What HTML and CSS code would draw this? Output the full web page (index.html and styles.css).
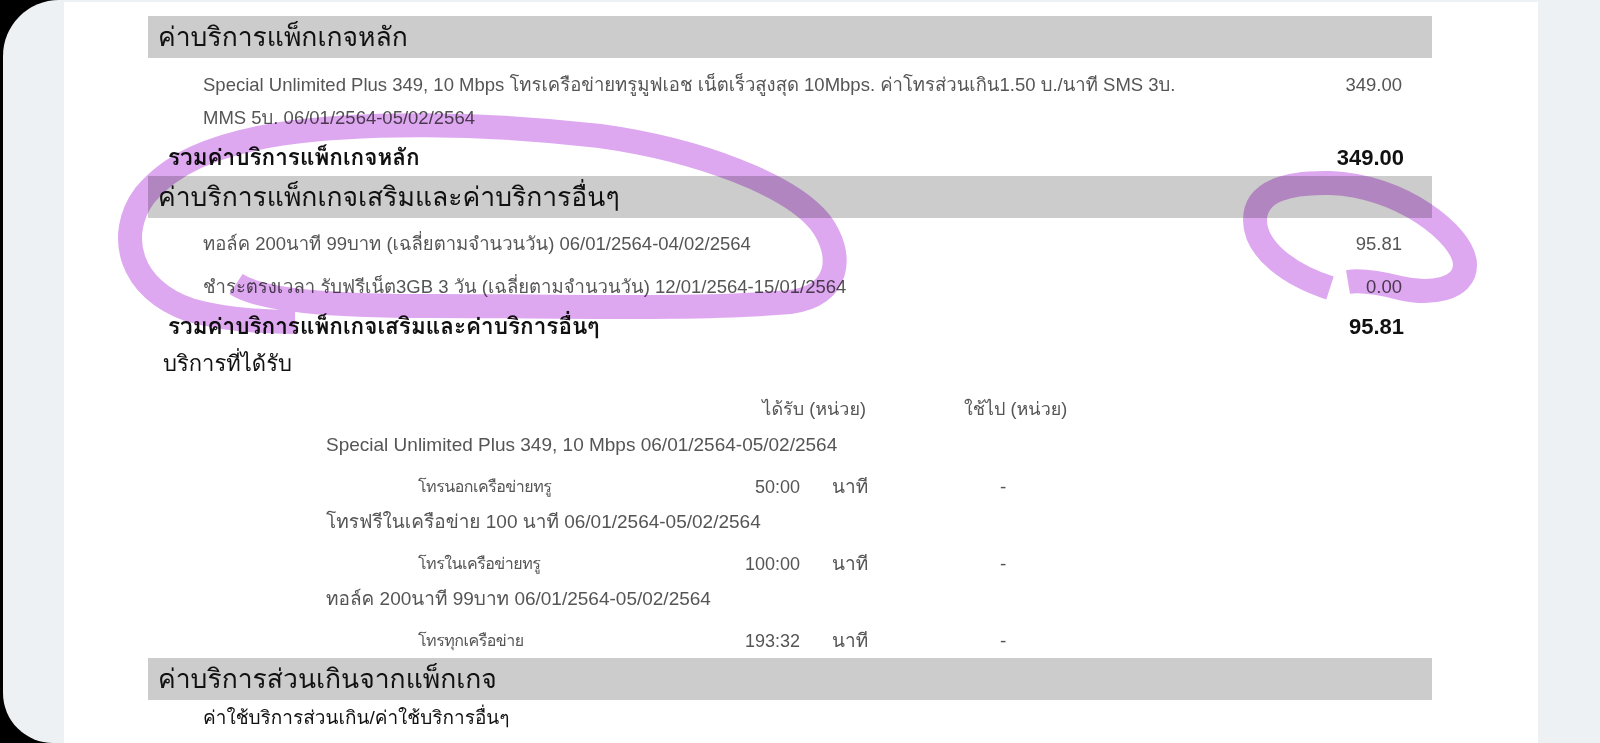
FILE: index.html
```html
<!DOCTYPE html>
<html lang="th">
<head>
    <meta charset="UTF-8">
    <meta name="viewport" content="width=device-width, initial-scale=1.0">
    <title>ใบแจ้งค่าบริการ</title>
    <link rel="stylesheet" href="styles.css">
</head>
<body>
    <div class="viewport">
        <div class="screen">
            <div class="page">
                <div class="content">
                    <div class="bar">ค่าบริการแพ็กเกจหลัก</div>
                    <div class="items">
                        <div class="item">
                            <div class="item-name">Special Unlimited Plus 349, 10 Mbps โทรเครือข่ายทรูมูฟเอช เน็ตเร็วสูงสุด 10Mbps. ค่าโทรส่วนเกิน1.50 บ./นาที SMS 3บ.<br>MMS 5บ. 06/01/2564-05/02/2564</div>
                            <div class="item-price">349.00</div>
                        </div>
                    </div>
                    <div class="total">
                        <span>รวมค่าบริการแพ็กเกจหลัก</span>
                        <span class="total-amount">349.00</span>
                    </div>

                    <div class="bar">ค่าบริการแพ็กเกจเสริมและค่าบริการอื่นๆ</div>
                    <div class="items">
                        <div class="item">
                            <div class="item-name">ทอล์ค 200นาที 99บาท (เฉลี่ยตามจำนวนวัน) 06/01/2564-04/02/2564</div>
                            <div class="item-price">95.81</div>
                        </div>
                        <div class="item">
                            <div class="item-name">ชำระตรงเวลา รับฟรีเน็ต3GB 3 วัน (เฉลี่ยตามจำนวนวัน) 12/01/2564-15/01/2564</div>
                            <div class="item-price">0.00</div>
                        </div>
                    </div>
                    <div class="total">
                        <span>รวมค่าบริการแพ็กเกจเสริมและค่าบริการอื่นๆ</span>
                        <span class="total-amount">95.81</span>
                    </div>

                    <div class="heading">บริการที่ได้รับ</div>
                    <div class="svc">
                        <div class="svc-head svc-got">ได้รับ (หน่วย)</div>
                        <div class="svc-head svc-used">ใช้ไป (หน่วย)</div>

                        <div class="svc-pkg">Special Unlimited Plus 349, 10 Mbps 06/01/2564-05/02/2564</div>
                        <div class="svc-name">โทรนอกเครือข่ายทรู</div>
                        <div class="svc-amount">50:00</div>
                        <div class="svc-unit">นาที</div>
                        <div class="svc-dash">-</div>

                        <div class="svc-pkg">โทรฟรีในเครือข่าย 100 นาที 06/01/2564-05/02/2564</div>
                        <div class="svc-name">โทรในเครือข่ายทรู</div>
                        <div class="svc-amount">100:00</div>
                        <div class="svc-unit">นาที</div>
                        <div class="svc-dash">-</div>

                        <div class="svc-pkg">ทอล์ค 200นาที 99บาท 06/01/2564-05/02/2564</div>
                        <div class="svc-name">โทรทุกเครือข่าย</div>
                        <div class="svc-amount">193:32</div>
                        <div class="svc-unit">นาที</div>
                        <div class="svc-dash">-</div>
                    </div>

                    <div class="bar">ค่าบริการส่วนเกินจากแพ็กเกจ</div>
                    <div class="sub-heading">ค่าใช้บริการส่วนเกิน/ค่าใช้บริการอื่นๆ</div>
                </div>
            </div>
        </div>

        <!-- highlighter marks drawn over the bill -->
        <svg class="marker" width="1600" height="743" viewBox="0 0 1600 743">
            <path d="M 236 284 C 260 300, 330 306, 430 306 C 560 306, 700 310, 790 302 C 840 296, 845 255, 820 222 C 790 185, 700 150, 600 136 C 480 122, 360 122, 280 134 C 210 145, 170 165, 145 195 C 115 235, 130 290, 190 310 C 225 320, 260 322, 295 322"/>
            <path d="M 1330 288 C 1290 275, 1255 250, 1255 220 C 1255 190, 1290 182, 1330 183 C 1400 185, 1465 235, 1465 265 C 1465 290, 1430 295, 1400 288 C 1380 283, 1360 280, 1348 282"/>
        </svg>
    </div>
</body>
</html>
```

FILE: styles.css
```css
body {
    margin: 0;
    background: #000;
    font-family: "Liberation Sans", "Loma", "Garuda", "Noto Sans Thai", "Noto Sans", sans-serif;
}
.viewport {
    position: relative;
    width: 1600px;
    height: 743px;
    overflow: hidden;
}
.screen {
    display: flex;
    height: 743px;
    margin-left: 3px;
    padding-top: 2px;
    box-sizing: border-box;
    background: #eef1f3;
    border-radius: 56px 0 0 50px;
}
.page {
    width: 1474px;
    margin-left: 61px;
    padding: 14px 0 0 84px;
    box-sizing: border-box;
    background: #fff;
}
.content {
    width: 1284px;
}
.bar {
    height: 42px;
    line-height: 42px;
    padding-left: 10px;
    background: #cccccc;
    color: #111;
    font-size: 26.5px;
}
.items {
    padding-top: 4.5px;
}
.item {
    display: flex;
    justify-content: space-between;
    padding: 5px 30px 5px 55px;
    line-height: 33px;
    font-size: 18.5px;
    color: #555;
}
.total {
    display: flex;
    justify-content: space-between;
    padding: 0 28px 0 20px;
    line-height: 37px;
    font-size: 22.5px;
    font-weight: bold;
    color: #111;
}
.total-amount {
    font-size: 22px;
}
.heading {
    padding-left: 15px;
    line-height: 37px;
    font-size: 22px;
    color: #111;
}
.svc {
    display: grid;
    grid-template-columns: 394px 80px 32px 34px 98px 106px;
    margin-top: 10px;
    padding-left: 178px;
    font-size: 19px;
    color: #555;
}
.svc-head {
    line-height: 35px;
    font-size: 18px;
    white-space: nowrap;
}
.svc-got {
    grid-column: 2 / 5;
    text-align: right;
}
.svc-used {
    grid-column: 6;
}
.svc-pkg {
    grid-column: 1 / -1;
    line-height: 35px;
}
.svc-name, .svc-amount, .svc-unit, .svc-dash {
    padding: 8px 0 0;
    line-height: 34px;
}
.svc-name {
    grid-column: 1;
    padding-left: 92px;
    font-size: 16px;
    letter-spacing: -0.5px;
}
.svc-amount {
    grid-column: 2;
    text-align: right;
    font-size: 18px;
}
.svc-unit {
    grid-column: 4;
}
.svc-dash {
    grid-column: 6;
    padding-left: 36px;
}
.sub-heading {
    padding-left: 55px;
    line-height: 36px;
    font-size: 19px;
    color: #111;
}
.marker {
    position: absolute;
    top: 0;
    left: 0;
    pointer-events: none;
    mix-blend-mode: multiply;
}
.marker path {
    fill: none;
    stroke: #dea8f0;
    stroke-width: 24;
}
```
